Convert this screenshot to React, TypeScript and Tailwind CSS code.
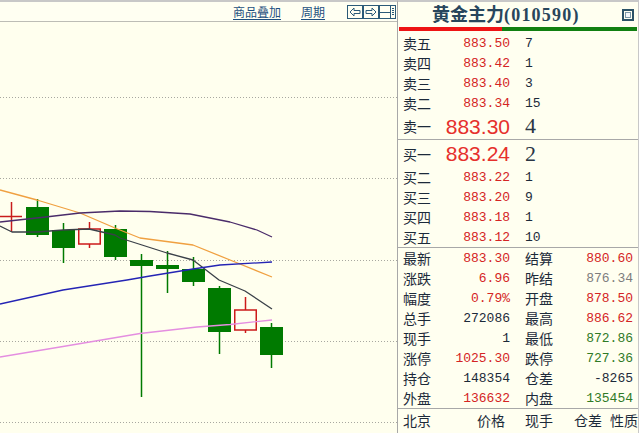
const cjk = "font-['Noto_Sans_CJK_SC',sans-serif] text-[14px] leading-none";
const mono = "font-['Liberation_Mono',monospace] text-[13px] leading-none";
const ink = 'text-[#1c2a3a]';
const red = 'text-[#d42424]';
const green = 'text-[#2f7a26]';
const gray = 'text-[#7d7d7d]';

type Candle = { x: number; top: number; bot: number; hi: number; lo: number; up?: boolean };

const candles: Candle[] = [
  { x: 26, top: 207, bot: 235, hi: 199, lo: 237 },
  { x: 52, top: 230, bot: 248, hi: 223, lo: 263 },
  { x: 78, top: 229, bot: 244, hi: 222, lo: 248, up: true },
  { x: 104, top: 229, bot: 257, hi: 225, lo: 260 },
  { x: 130, top: 260, bot: 266, hi: 254, lo: 397 },
  { x: 156, top: 265, bot: 269, hi: 251, lo: 293 },
  { x: 182, top: 269, bot: 282, hi: 257, lo: 286 },
  { x: 208, top: 288, bot: 332, hi: 286, lo: 354 },
  { x: 234, top: 310, bot: 330, hi: 297, lo: 333, up: true },
  { x: 260, top: 327, bot: 355, hi: 323, lo: 368 },
];

const maLines = [
  { color: '#f0a040', pts: '0,190 37,200 80,213 115,228 140,238 193,245 235,262 272,277' },
  { color: '#3a4048', pts: '0,226 12,232 37,232 63,230 89,229 115,235 120,238 142,245 167,253 193,260 219,280 245,291 272,309' },
  { color: '#4a2c6a', pts: '0,222 50,216.5 80,213 120,211 150,211.5 190,214 230,222 257,230 272,237' },
  { color: '#2424b4', pts: '0,304 63,290 127,280 150,276 193,269 220,265 272,262' },
  { color: '#e48ee0', pts: '0,357 60,347 140,333.5 197,327 230,324.5 272,320' },
];

function Chart() {
  return (
    <svg width={397} height={411} viewBox="0 22 397 411" className="block">
      {[97, 178, 260, 341, 422].map(y => (
        <line key={y} x1={0} x2={397} y1={y + 0.5} y2={y + 0.5} stroke="#a8a8a0" strokeDasharray="1 2" />
      ))}
      {/* doji at left edge */}
      <line x1={0} x2={22} y1={216.5} y2={216.5} stroke="#c81c1c" strokeWidth={1.5} />
      <line x1={11.5} x2={11.5} y1={202} y2={232} stroke="#c81c1c" strokeWidth={1.5} />
      {candles.map(c => {
        const cx = c.x + 11.5;
        const col = c.up ? '#cc1a1a' : '#007a00';
        return (
          <g key={c.x}>
            <line x1={cx} x2={cx} y1={c.hi} y2={c.lo} stroke={col} strokeWidth={1.5} />
            {c.up ? (
              <rect x={c.x + 0.75} y={c.top} width={21.5} height={c.bot - c.top} fill="#ffffee" stroke={col} strokeWidth={1.5} />
            ) : (
              <rect x={c.x} y={c.top} width={23} height={c.bot - c.top} fill={col} />
            )}
          </g>
        );
      })}
      {maLines.map(l => (
        <polyline key={l.color} points={l.pts} fill="none" stroke={l.color} strokeWidth={1.3} strokeLinejoin="round" />
      ))}
    </svg>
  );
}

function ArrowBox({ dir }: { dir: 'l' | 'r' }) {
  const pts = dir === 'l' ? '3,7 7,3 7,5.5 13,5.5 13,8.5 7,8.5 7,11' : '13,7 9,3 9,5.5 3,5.5 3,8.5 9,8.5 9,11';
  return (
    <svg width={16} height={14} viewBox="0 0 16 14" className="shrink-0">
      <rect x={0.5} y={0.5} width={15} height={13} fill="none" stroke="#2b5a78" />
      <polygon points={pts} fill="none" stroke="#2b5a78" />
    </svg>
  );
}

function LayoutBox() {
  return (
    <svg width={17} height={14} viewBox="0 0 17 14" className="shrink-0">
      <rect x={0.5} y={0.5} width={16} height={13} fill="none" stroke="#2b5a78" />
      <line x1={1} x2={11} y1={7.5} y2={7.5} stroke="#2b5a78" />
      <line x1={11.5} x2={11.5} y1={1} y2={13} stroke="#2b5a78" />
      {[3.5, 5.5, 7.5, 9.5].map(y => (
        <line key={y} x1={13} x2={15} y1={y} y2={y} stroke="#2b5a78" />
      ))}
    </svg>
  );
}

function BookRow({ label, price, vol }: { label: string; price: string; vol: string }) {
  return (
    <div className="flex h-[20px] items-center">
      <div className="flex w-[112px] items-center justify-between pl-[5px]">
        <span className={`${cjk} ${ink}`}>{label}</span>
        <span className={`${mono} ${red}`}>{price}</span>
      </div>
      <span className={`${mono} ${ink} pl-[15px]`}>{vol}</span>
    </div>
  );
}

function BigRow({ label, price, vol, h }: { label: string; price: string; vol: string; h: string }) {
  return (
    <div className={`flex items-center ${h}`}>
      <div className="flex w-[112px] items-center justify-between pl-[5px]">
        <span className={`${cjk} ${ink}`}>{label}</span>
        <span className="font-['Liberation_Sans',sans-serif] text-[21px] leading-none text-[#e6302c]">{price}</span>
      </div>
      <span className="pl-[15px] font-['Liberation_Serif',serif] text-[22px] leading-none text-[#2a3644]">{vol}</span>
    </div>
  );
}

const stats: [string, string, string, string, string, string][] = [
  ['最新', '883.30', red, '结算', '880.60', red],
  ['涨跌', '6.96', red, '昨结', '876.34', gray],
  ['幅度', '0.79%', red, '开盘', '878.50', red],
  ['总手', '272086', ink, '最高', '886.62', red],
  ['现手', '1', ink, '最低', '872.86', green],
  ['涨停', '1025.30', red, '跌停', '727.36', green],
  ['持仓', '148354', ink, '仓差', '-8265', ink],
  ['外盘', '136632', red, '内盘', '135454', green],
];

export default function App() {
  return (
    <div className="flex h-[433px] w-[639px] overflow-hidden bg-[#ffffee]">
      {/* Left: chart */}
      <div className="flex w-[397px] shrink-0 flex-col">
        <div className="flex h-[22px] items-center whitespace-nowrap border-t-2 border-b border-t-[#c8c8c8] border-b-[#bdbdb5] bg-[#fffff2]">
          <span className="ml-[233px] shrink-0 font-['Noto_Sans_CJK_SC',sans-serif] text-[12px] leading-none text-[#1d4f80] underline underline-offset-2">
            商品叠加
          </span>
          <span className="ml-[20px] shrink-0 font-['Noto_Sans_CJK_SC',sans-serif] text-[12px] leading-none text-[#1d4f80] underline underline-offset-2">
            周期
          </span>
          <div className="ml-[22px] flex shrink-0 items-center">
            <ArrowBox dir="l" />
            <ArrowBox dir="r" />
            <LayoutBox />
          </div>
        </div>
        <Chart />
      </div>

      {/* Right: quote panel */}
      <div className="flex w-[242px] shrink-0 flex-col border-x border-t-2 border-l-[#a8a8a8] border-r-[#c8c8c8] border-t-[#c8c8c8] bg-[#fffff0]">
        <div className="flex h-[25px] items-center whitespace-nowrap">
          <span className="pl-[34px] font-['Liberation_Serif','Noto_Sans_CJK_SC',serif] text-[18px] font-bold leading-none text-[#28465c]">
            黄金主力<span className="tracking-[1.2px]">(010590)</span>
          </span>
          <div className="mr-[4px] ml-auto flex h-[12px] w-[12px] items-center justify-center border-2 border-[#2b5267]">
            <div className="h-[6px] w-[6px] border border-[#7c98a8] bg-[#f4f8fa]" />
          </div>
        </div>
        <div className="mx-px flex h-[4px]">
          <div className="w-[103px] bg-[#ee1414]" />
          <div className="flex-1 bg-[#118011]" />
        </div>

        <div className="pt-[2px]">
          <BookRow label="卖五" price="883.50" vol="7" />
          <BookRow label="卖四" price="883.42" vol="1" />
          <BookRow label="卖三" price="883.40" vol="3" />
          <BookRow label="卖二" price="883.34" vol="15" />
          <BigRow label="卖一" price="883.30" vol="4" h="h-[26px]" />
        </div>
        <div className="h-px bg-[#a8a8a8]" />
        <div>
          <BigRow label="买一" price="883.24" vol="2" h="h-[27px]" />
          <BookRow label="买二" price="883.22" vol="1" />
          <BookRow label="买三" price="883.20" vol="9" />
          <BookRow label="买四" price="883.18" vol="1" />
          <BookRow label="买五" price="883.12" vol="10" />
        </div>
        <div className="h-px bg-[#a8a8a8]" />
        <div>
          {stats.map(([l1, v1, c1, l2, v2, c2]) => (
            <div key={l1} className="flex h-[20px] items-center">
              <div className="flex w-[112px] items-center justify-between pl-[5px]">
                <span className={`${cjk} ${ink}`}>{l1}</span>
                <span className={`${mono} ${c1}`}>{v1}</span>
              </div>
              <div className="flex w-[123px] items-center justify-between pl-[15px]">
                <span className={`${cjk} ${ink}`}>{l2}</span>
                <span className={`${mono} ${c2}`}>{v2}</span>
              </div>
            </div>
          ))}
        </div>
        <div className="h-px bg-[#a8a8a8]" />
        <div className={`flex h-[22px] items-center whitespace-nowrap ${cjk} ${ink}`}>
          <div className="flex w-[107px] items-center justify-between pl-[5px]">
            <span>北京</span>
            <span>价格</span>
          </div>
          <span className="pl-[20px]">现手</span>
          <span className="ml-[21px]">仓差</span>
          <span className="ml-[8px]">性质</span>
        </div>
      </div>
    </div>
  );
}
